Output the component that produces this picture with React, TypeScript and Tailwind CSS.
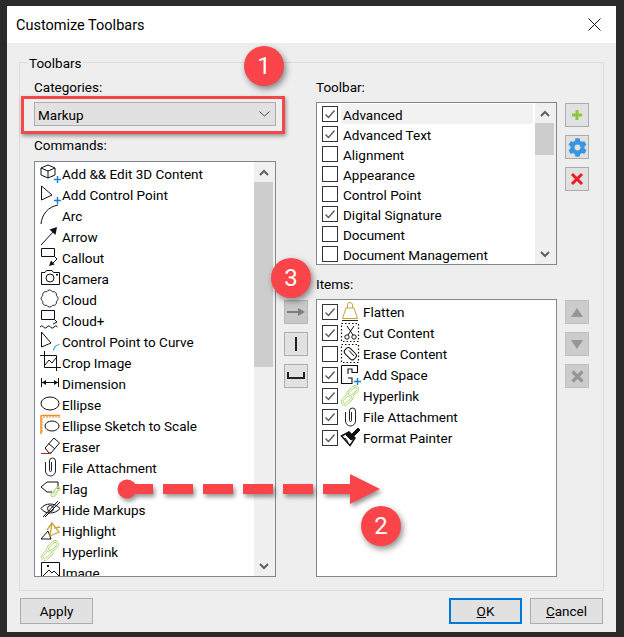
import type { ReactNode } from "react";
import { FaCog } from "react-icons/fa";

const BLUE = "#0f7fd8";
const GREEN = "#8cc63f";
const GOLD = "#c9a63c";

function Ico({ children, w = 21 }: { children: ReactNode; w?: number }) {
  return (
    <svg width={w} height="21" viewBox={`0 0 ${w} 21`} fill="none" stroke="#111" strokeWidth="1" className="shrink-0">
      {children}
    </svg>
  );
}

const Plus = ({ y = 14 }: { y?: number }) => (
  <path d={`M17.500 ${y}v7M14 ${y + 3.500}h7`} stroke={BLUE} strokeWidth="1.400" />
);

const Clip = () => (
  <path d="M5.500 6 V15 a5 5 0 0 0 10 0 V5 a3 3 0 0 0-6 0 V14.500 a1 1 0 0 0 2 0 V6" stroke="#222" strokeWidth="1" />
);

const LINK_PATHS = "M8 9.500 L3 14.500 a2.800 2.800 0 0 0 4 4 L12 13.500 a2.800 2.800 0 0 0-1.500-4 M12 10.500 L17 6.500 a2.800 2.800 0 0 0-4-4 L8 7.500 a2.800 2.800 0 0 0 1.500 4";

const Link = () => (
  <g>
    <path d={LINK_PATHS} stroke={GREEN} strokeWidth="2.300" />
    <path d={LINK_PATHS} stroke="#fff" strokeWidth="1.100" />
  </g>
);

const icons: Record<string, ReactNode> = {
  cube: (
    <Ico>
      <path d="M1 6 L8 3 L15 6 V13 L8 16 L1 13 Z M1 6 L8 9 L15 6 M8 9 V16" />
      <Plus />
    </Ico>
  ),
  point: (
    <Ico>
      <path d="M1.500 3 V17 L12 12 Z" />
      <Plus />
    </Ico>
  ),
  arc: (
    <Ico>
      <path d="M1 20 C2 10 8 3 18 1" />
    </Ico>
  ),
  arrow: (
    <Ico>
      <path d="M1 20 L14 6" />
      <path d="M17 2 L15.500 10 L9.500 4.500 Z" fill="#111" stroke="none" />
    </Ico>
  ),
  callout: (
    <Ico>
      <path d="M1.500 2.500 H14.500 V10.500 H1.500 Z M14.500 10.500 L17 13 L13 17" />
      <path d="M9 20 L14.500 18.500 L11 14.500 Z" fill="#111" stroke="none" />
    </Ico>
  ),
  camera: (
    <Ico>
      <path d="M1.500 5.500 H5 L6.500 3.500 H12 L13.500 5.500 H19.500 V17.500 H1.500 Z" />
      <circle cx="10" cy="11" r="4" />
      <rect x="16" y="7" width="2" height="1.500" fill="#111" stroke="none" />
    </Ico>
  ),
  cloud: (
    <Ico>
      <g transform="translate(1 1.500) scale(0.860)">
        <path d="M17.850 7.250 A3.600 3.600 0 0 1 17.850 13.750 A3.600 3.600 0 0 1 13.250 18.350 A3.600 3.600 0 0 1 6.750 18.350 A3.600 3.600 0 0 1 2.150 13.750 A3.600 3.600 0 0 1 2.150 7.250 A3.600 3.600 0 0 1 6.750 2.650 A3.600 3.600 0 0 1 13.250 2.650 A3.600 3.600 0 0 1 17.850 7.250 Z" />
      </g>
    </Ico>
  ),
  cloudPlus: (
    <Ico>
      <path d="M1.500 1.500 H14.500 V10.500 H1.500 Z M14.500 10.500 L17 13 L13 15" />
      <path d="M0 18 q2-2.500 3.500 0 t3.500 0 t3.500 0 t3.500 0 t3.500 0" />
    </Ico>
  ),
  curve: (
    <Ico>
      <path d="M1.500 2 V17 L11 13 Z" />
      <path d="M13.500 20.500 C14 17 16 15 19.500 14.500" stroke="#3b9fe0" strokeWidth="1.200" />
    </Ico>
  ),
  crop: (
    <Ico>
      <path d="M4.500 0 V16.500 H21 M0 4.500 H16.500 V20" />
      <path d="M5 14 L9 9 L12 12 L16 7" />
    </Ico>
  ),
  dimension: (
    <Ico>
      <path d="M1.500 6 V15 M18.500 6 V15 M2 10.500 H18" />
      <path d="M2 10.500 L6 8 V13 Z M18 10.500 L14 8 V13 Z" fill="#111" stroke="none" />
    </Ico>
  ),
  ellipse: (
    <Ico>
      <ellipse cx="10" cy="10.500" rx="9" ry="6.500" />
    </Ico>
  ),
  ellipseScale: (
    <Ico>
      <path d="M1 1.500 H20 M1 1.500 V20" stroke="#f28c1e" strokeWidth="1.500" />
      <path d="M4 2 V4 M7 2 V4 M10 2 V4 M13 2 V4 M16 2 V4 M19 2 V4 M1 5 H3 M1 8 H3 M1 11 H3 M1 14 H3 M1 17 H3" stroke="#f28c1e" />
      <ellipse cx="12" cy="12" rx="7" ry="5" />
    </Ico>
  ),
  eraser: (
    <Ico>
      <path d="M5 13 L14 3 L19.500 8 L11 18 H9 Z M8.500 8.500 L15 14" />
      <path d="M1 18.500 H11" stroke="#b22a2a" />
    </Ico>
  ),
  clip: (
    <Ico>
      <Clip />
    </Ico>
  ),
  flag: (
    <Ico>
      <path d="M1 10 L7 5 H18 V12 M1 10 L7 15 H12" />
      <g transform="translate(10 9) scale(0.550)">
        <Link />
      </g>
    </Ico>
  ),
  hide: (
    <Ico>
      <path d="M1 10.500 C5 4.500 15 4.500 20 10.500 C15 16.500 5 16.500 1 10.500 Z" />
      <circle cx="10.500" cy="10.500" r="3" />
      <path d="M3 19 L18 3 M5 19 L20 4" />
    </Ico>
  ),
  highlight: (
    <Ico>
      <path d="M1 20 L8 12 L11 20 Z" />
      <path d="M7 11 L12 4 M12 4 L19 13 L10 17 Z M14 9 L20 8" stroke={GOLD} strokeWidth="1.300" />
    </Ico>
  ),
  link: (
    <Ico>
      <Link />
    </Ico>
  ),
  image: (
    <Ico>
      <path d="M1.500 1.500 H19.500 V21 H1.500 Z" />
      <path d="M3 15 L9 9 L12 12 L14 10 L19 15" />
      <rect x="7" y="4" width="2" height="2" fill="#111" stroke="none" />
    </Ico>
  ),
  weight: (
    <Ico>
      <path d="M2.500 17.500 L6 7 H14 L17.500 17.500 Z M7.500 7 V4 A2.500 2.500 0 0 1 12.500 4 V7" stroke={GOLD} />
      <path d="M2 19.500 H18" stroke="#222" />
    </Ico>
  ),
  scissors: (
    <Ico>
      <rect x="1.500" y="1.500" width="17" height="18" stroke="#111" strokeWidth="1.200" strokeDasharray="1.500 2" />
      <path d="M7 4 L13 13 M14 4 L8 13" />
      <circle cx="7" cy="15" r="2.200" />
      <circle cx="14" cy="15" r="2.200" />
    </Ico>
  ),
  eraseBox: (
    <Ico>
      <rect x="1.500" y="1.500" width="17" height="18" stroke="#111" strokeWidth="1.200" strokeDasharray="1.500 2" />
      <rect x="4" y="7" width="13" height="7.500" rx="3" transform="rotate(45 10.500 10.500)" />
      <path d="M9 7.500 L14 13" />
    </Ico>
  ),
  space: (
    <Ico>
      <path d="M1.500 1.500 H17.500 V8.500 H12 V5 H8 V10 M1.500 1.500 V19.500 H12 V14 H8" strokeWidth="1.100" />
      <Plus />
    </Ico>
  ),
  painter: (
    <Ico>
      <path d="M1.500 9 L9 5 L15 11 L10 18.500 Z" fill="#fff" strokeWidth="1.500" />
      <path d="M6 8 L9 5 L15 11 L11 13 Z" fill="#111" />
      <path d="M11 8 L18 1 L20 3 L13 10 Z" fill="#111" />
      <path d="M5 11 L8 15" stroke="#111" />
    </Ico>
  ),
};

const commands: [string, string][] = [
  ["cube", "Add && Edit 3D Content"],
  ["point", "Add Control Point"],
  ["arc", "Arc"],
  ["arrow", "Arrow"],
  ["callout", "Callout"],
  ["camera", "Camera"],
  ["cloud", "Cloud"],
  ["cloudPlus", "Cloud+"],
  ["curve", "Control Point to Curve"],
  ["crop", "Crop Image"],
  ["dimension", "Dimension"],
  ["ellipse", "Ellipse"],
  ["ellipseScale", "Ellipse Sketch to Scale"],
  ["eraser", "Eraser"],
  ["clip", "File Attachment"],
  ["flag", "Flag"],
  ["hide", "Hide Markups"],
  ["highlight", "Highlight"],
  ["link", "Hyperlink"],
  ["image", "Image"],
];

const toolbars: [string, boolean][] = [
  ["Advanced", true],
  ["Advanced Text", true],
  ["Alignment", false],
  ["Appearance", false],
  ["Control Point", false],
  ["Digital Signature", true],
  ["Document", false],
  ["Document Management", false],
];

const items: [string, string, boolean][] = [
  ["weight", "Flatten", true],
  ["scissors", "Cut Content", true],
  ["eraseBox", "Erase Content", false],
  ["space", "Add Space", true],
  ["link", "Hyperlink", true],
  ["clip", "File Attachment", true],
  ["painter", "Format Painter", true],
];

function Check({ on }: { on: boolean }) {
  return (
    <span className="w-[16px] h-[16px] border border-[#333] bg-white flex items-center justify-center shrink-0">
      {on && (
        <svg width="12" height="12" viewBox="0 0 12 12" fill="none" stroke="#555" strokeWidth="1.300">
          <path d="M1.500 6.500 L4.500 9.500 L10.500 2.500" />
        </svg>
      )}
    </span>
  );
}

function Chevron({ up }: { up?: boolean }) {
  return (
    <svg width="10" height="7" viewBox="0 0 10 7" fill="none" stroke="#606060" strokeWidth="2">
      <path d={up ? "M1 6 L5 2 L9 6" : "M1 1 L5 5 L9 1"} />
    </svg>
  );
}

function Scrollbar({ thumb }: { thumb: string }) {
  return (
    <div className="w-[21px] bg-[#f0f0f0] flex flex-col shrink-0">
      <div className="h-[20px] w-[19px] flex items-center justify-center shrink-0">
        <Chevron up />
      </div>
      <div className={`bg-[#cdcdcd] w-[19px] shrink-0 ${thumb}`} />
      <div className="flex-1" />
      <div className="h-[20px] w-[19px] flex items-center justify-center shrink-0">
        <Chevron />
      </div>
    </div>
  );
}

function Square({ children, off, strong }: { children: ReactNode; off?: boolean; strong?: boolean }) {
  const tone = off
    ? strong
      ? "bg-[#c8c8c8] border-[#b8b8b8]"
      : "bg-[#cccccc] border-[#bfbfbf]"
    : "bg-[#e1e1e1] border-[#adadad]";
  return <div className={`w-[24px] h-[24px] border flex items-center justify-center ${tone}`}>{children}</div>;
}

function Btn({ children, primary }: { children: ReactNode; primary?: boolean }) {
  return (
    <button
      className={`w-[73px] h-[26px] bg-[#e1e1e1] flex items-center justify-center ${
        primary ? "border-2 border-[#0078d7]" : "border border-[#adadad]"
      }`}
    >
      {children}
    </button>
  );
}

function Badge({ n, className }: { n: string; className: string }) {
  return (
    <div
      className={`absolute w-[40px] h-[40px] rounded-full bg-[#f94449] text-white text-[24px] flex items-center justify-center shadow-[2px_3px_6px_rgba(0,0,0,0.45)] ${className}`}
    >
      {n}
    </div>
  );
}

export default function App() {
  return (
    <div
      className="relative w-[624px] h-[637px] overflow-hidden bg-[#2b2b2b] pt-[6px] pl-[7px] text-[13.500px] text-black"
      style={{ fontFamily: 'Roboto, "Noto Sans", sans-serif' }}
    >
      <div className="w-[609px] h-[626px] flex flex-col bg-[#eeeeee]">
        <div className="h-[37px] bg-white flex items-center justify-between pl-[9px] pr-[15px] shrink-0">
          <span className="text-[14.500px] pt-[2px]">Customize Toolbars</span>
          <svg width="13" height="13" viewBox="0 0 13 13" stroke="#111" strokeWidth="1">
            <path d="M0.500 0.500 L12.500 12.500 M12.500 0.500 L0.500 12.500" />
          </svg>
        </div>

        <div className="flex-1 px-[12px] pt-[9px] flex flex-col">
          <fieldset className="h-[539px] w-[585px] border border-[#dcdcdc] px-[14px]">
            <legend className="-ml-[6px] px-[1px] pt-[2px] leading-[18px]">Toolbars</legend>
            <div className="flex pt-[6px]">
              <div className="w-[242px] flex flex-col">
                <div className="h-[24px] leading-[18px]">Categories:</div>
                <div className="h-[24px] border border-[#adadad] bg-[#e1e1e1] flex items-center justify-between pl-[3px] pr-[5px]">
                  <span className="pt-[2px]">Markup</span>
                  <svg width="11" height="6" viewBox="0 0 11 6" fill="none" stroke="#444">
                    <path d="M0.500 0.500 L5.500 5 L10.500 0.500" />
                  </svg>
                </div>
                <div className="h-[35px] pt-[10px] leading-[18px]">Commands:</div>
                <div className="h-[416px] border border-[#82868f] bg-white flex overflow-hidden">
                  <div className="flex-1 overflow-hidden pl-[5px]">
                    {commands.map(([icon, label]) => (
                      <div key={label} className="h-[21px] flex items-center gap-[1px] whitespace-nowrap">
                        {icons[icon]}
                        <span className="pt-[3px]">{label}</span>
                      </div>
                    ))}
                  </div>
                  <Scrollbar thumb="h-[185px]" />
                </div>
              </div>

              <div className="w-[24px] ml-[8px] pt-[222px] flex flex-col gap-[8px]">
                <Square off strong>
                  <svg width="20" height="10" viewBox="0 0 20 10" fill="#7d7d7d">
                    <path d="M1 4 H12 V1 L19 5 L12 9 V6 H1 Z" />
                  </svg>
                </Square>
                <Square>
                  <span className="w-[2px] h-[14px] bg-[#222]" />
                </Square>
                <Square>
                  <svg width="18" height="8" viewBox="0 0 18 8" fill="none" stroke="#222" strokeWidth="2">
                    <path d="M1 0 V6 H17 V0" />
                  </svg>
                </Square>
              </div>

              <div className="w-[241px] ml-[8px] flex flex-col">
                <div className="h-[24px] leading-[18px]">Toolbar:</div>
                <div className="h-[163px] border border-[#82868f] bg-white flex overflow-hidden">
                  <div className="flex-1 pt-[1px] pl-[5px] overflow-hidden">
                    {toolbars.map(([label, on], i) => (
                      <div key={label} className="h-[20px] flex items-center gap-[3px] whitespace-nowrap">
                        <Check on={on} />
                        <span className={`flex-1 h-[20px] leading-[22px] pl-[2px] mr-[2px] ${i === 0 ? "bg-[#f2f2f2]" : ""}`}>
                          {label}
                        </span>
                      </div>
                    ))}
                  </div>
                  <Scrollbar thumb="h-[32px]" />
                </div>
                <div className="h-[34px] pt-[10px] leading-[18px]">Items:</div>
                <div className="h-[278px] border border-[#82868f] bg-white pt-[1px] pl-[5px] overflow-hidden">
                  {items.map(([icon, label, on]) => (
                    <div key={label} className="h-[21px] flex items-center gap-[2px] whitespace-nowrap">
                      <Check on={on} />
                      {icons[icon]}
                      <span className="pt-[2px]">{label}</span>
                    </div>
                  ))}
                </div>
              </div>

              <div className="w-[24px] ml-[8px] flex flex-col">
                <div className="pt-[25px] flex flex-col gap-[8px]">
                  <Square>
                    <svg width="12" height="12" viewBox="0 0 12 12" fill={GREEN}>
                      <path d="M4.500 1 H7.500 V4.500 H11 V7.500 H7.500 V11 H4.500 V7.500 H1 V4.500 H4.500 Z" />
                    </svg>
                  </Square>
                  <Square>
                    <FaCog size={19} color="#3a96e0" />
                  </Square>
                  <Square>
                    <svg width="14" height="14" viewBox="0 0 14 14" stroke="#ed1c24" strokeWidth="3">
                      <path d="M2 2 L12 12 M12 2 L2 12" />
                    </svg>
                  </Square>
                </div>
                <div className="pt-[109px] flex flex-col gap-[8px]">
                  <Square off>
                    <svg width="12" height="9" viewBox="0 0 12 9" fill="#969696">
                      <path d="M6 0 L12 9 H0 Z" />
                    </svg>
                  </Square>
                  <Square off>
                    <svg width="12" height="9" viewBox="0 0 12 9" fill="#969696">
                      <path d="M0 0 H12 L6 9 Z" />
                    </svg>
                  </Square>
                  <Square off>
                    <svg width="13" height="13" viewBox="0 0 13 13" stroke="#969696" strokeWidth="3.200">
                      <path d="M1.500 1.500 L11.500 11.500 M11.500 1.500 L1.500 11.500" />
                    </svg>
                  </Square>
                </div>
              </div>
            </div>
          </fieldset>

          <div className="flex justify-between w-[583px] ml-[1px] mt-[7px]">
            <Btn>Apply</Btn>
            <div className="flex gap-[8px]">
              <Btn primary>
                <span>
                  <u>O</u>K
                </span>
              </Btn>
              <Btn>
                <span>
                  <u>C</u>ancel
                </span>
              </Btn>
            </div>
          </div>
        </div>
      </div>

      <div className="absolute left-[21px] top-[96px] w-[264px] h-[38px] border-[3px] border-[#f4474a] shadow-[1px_2px_4px_rgba(0,0,0,0.4)]" />
      <svg width="300" height="50" viewBox="0 0 300 50" className="absolute left-[110px] top-[465px] drop-shadow-[2px_3px_2px_rgba(0,0,0,0.4)]">
        <g fill="#f94449">
          <circle cx="17" cy="24" r="9.500" />
          <rect x="17" y="19" width="26" height="10" />
          <rect x="53" y="19" width="30" height="10" />
          <rect x="93" y="19" width="30" height="10" />
          <rect x="133" y="19" width="30" height="10" />
          <rect x="173" y="19" width="30" height="10" />
          <path d="M213 19 H240 V9 L270 24 L240 39 V29 H213 Z" />
        </g>
      </svg>
      <Badge n="1" className="left-[244px] top-[46px]" />
      <Badge n="2" className="left-[361px] top-[506px]" />
      <Badge n="3" className="left-[271px] top-[258px]" />
    </div>
  );
}
